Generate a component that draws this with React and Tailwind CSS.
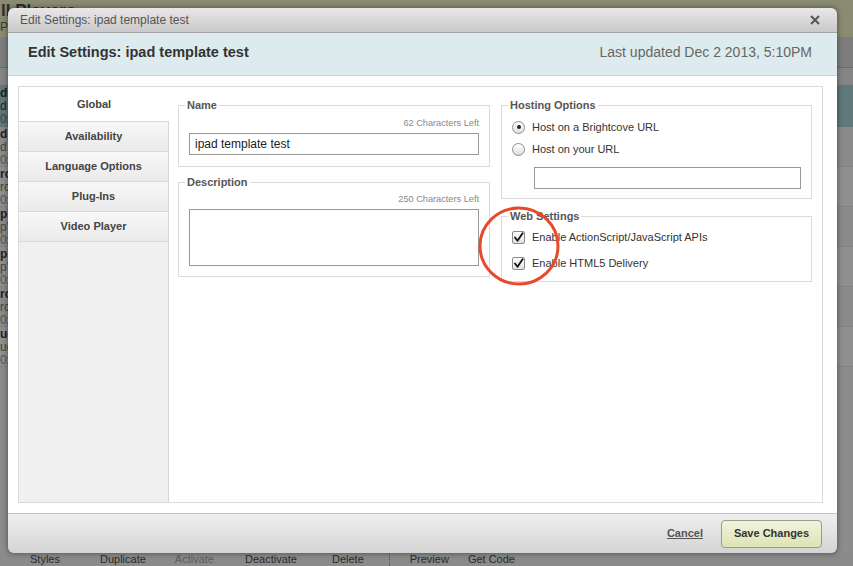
import React from "react";

function Radio({ checked }) {
  return (
    <span className="w-[13px] h-[13px] rounded-full border border-[#8c8c8c] bg-gradient-to-b from-white to-[#dedede] flex items-center justify-center shrink-0">
      {checked && <span className="w-[4px] h-[4px] rounded-full bg-[#222]" />}
    </span>
  );
}

function Check() {
  return (
    <span className="w-[13px] h-[13px] rounded-[2px] border border-[#8c8c8c] bg-gradient-to-b from-white to-[#e0e0e0] flex items-center justify-center shrink-0">
      <svg width="11" height="11" viewBox="0 0 11 11" fill="none">
        <path d="M2 5.5 L4.5 8.8 L9.6 1.2" stroke="#111" strokeWidth="1.8" strokeLinecap="round" strokeLinejoin="round" />
      </svg>
    </span>
  );
}

function Fieldset({ title, className, children }) {
  return (
    <fieldset className={"border border-[#dadada] px-[10px] " + className}>
      <legend className="-ml-[4px] px-[2px] text-[11px] leading-[13px] font-bold text-[#555]">{title}</legend>
      {children}
    </fieldset>
  );
}

const tabs = ["Availability", "Language Options", "Plug-Ins", "Video Player"];

export default function App() {
  return (
    <div className="relative w-[853px] h-[566px] overflow-hidden font-['Liberation_Sans',Arial,sans-serif] bg-[#8d8d8d]">
      {/* page behind the dialog */}
      <div className="flex flex-col h-full">
        <div className="h-[37px] bg-[#8a8b72] pt-[2px] overflow-hidden">
          <div className="text-[17px] leading-[17px] font-bold text-[#2e2e2a] pl-[1px]">ll Players</div>
          <div className="mt-[2px] text-[12px] leading-[13px] text-[#3a3a33]">Pl</div>
        </div>
        <div className="h-[31px] bg-[#7d7d7d] border-b border-[#6a6a6a]" />
        <div className="h-[17px] bg-[#858585]" />
        <div className="h-[42px] bg-[#607879] text-[12px] leading-[13px] text-[#222] pt-[2px]">
          <div className="font-bold">d</div>
          <div>d</div>
          <div className="text-[#444]">0x</div>
        </div>
        {["d", "rc", "p'", "p'", "rc", "ug"].map((t, i) => (
          <div
            key={i}
            className={"h-[40px] text-[12px] leading-[13px] text-[#222] pt-[1px] border-b border-[#818181] " + (i % 2 ? "bg-[#8f8f8f]" : "bg-[#8a8a8a]")}
          >
            <div className="font-bold">{t}</div>
            <div className="text-[#444]">{t}</div>
            <div className="text-[#555]">0x</div>
          </div>
        ))}
        <div className="flex-1 bg-[#8c8c8c]" />
        <div className="h-[14px] bg-[#8a8a8a] flex items-end text-[11px] leading-[13px] text-[#2a2a2a]">
          <span className="ml-[30px]">Styles</span>
          <span className="ml-[40px]">Duplicate</span>
          <span className="ml-[29px] text-[#5e5e5e]">Activate</span>
          <span className="ml-[31px]">Deactivate</span>
          <span className="ml-[35px]">Delete</span>
          <span className="ml-[25px] h-[13px] border-l border-dotted border-[#555]" />
          <span className="ml-[20px]">Preview</span>
          <span className="ml-[19px]">Get Code</span>
        </div>
      </div>

      {/* dialog */}
      <div className="absolute left-[8px] top-[8px] w-[829px] h-[545px] flex flex-col rounded-[6px] shadow-[0_0_5px_1px_rgba(0,0,0,0.35)]">
        <div className="h-[25px] rounded-t-[6px] bg-gradient-to-b from-[#e8e8e8] to-[#c9c9c9] border-b border-[#a3a3a3] flex items-center justify-between pl-[12px] pr-[17px]">
          <span className="text-[12px] text-[#555]">Edit Settings: ipad template test</span>
          <svg width="10" height="10" viewBox="0 0 10 10">
            <path d="M1 1 L9 9 M9 1 L1 9" stroke="#555" strokeWidth="2" />
          </svg>
        </div>
        <div className="h-[43px] bg-[#ddebee] border-b border-[#c9d3d5] flex items-center justify-between pl-[20px] pr-[25px] pb-[3px]">
          <span className="text-[14.5px] font-bold text-[#333]">Edit Settings: ipad template test</span>
          <span className="text-[14px] text-[#666]">Last updated Dec 2 2013, 5:10PM</span>
        </div>
        <div className="flex-1 bg-white pl-[10px] pr-[14px] pt-[10px] pb-[10px] flex">
          <div className="flex-1 border border-[#dadada] flex">
            <div className="w-[150px] bg-[#f0f0f0] flex flex-col">
              <div className="h-[34px] bg-white flex items-center justify-center text-[11px] font-bold text-[#444]">Global</div>
              {tabs.map((t) => (
                <div
                  key={t}
                  className="h-[30px] border-t border-r border-[#d8d8d8] bg-gradient-to-b from-[#f8f8f8] to-[#eaeaea] flex items-center justify-center text-[11px] font-bold text-[#444]"
                >
                  {t}
                </div>
              ))}
              <div className="flex-1 border-t border-r border-[#d8d8d8]" />
            </div>
            <div className="flex-1 flex gap-[11px] pl-[9px] pr-[10px] pt-[12px] items-start">
              <div className="w-[312px] flex flex-col gap-[9px]">
                <Fieldset title="Name" className="pb-[11px]">
                  <div className="pt-[6px] text-right text-[9.2px] leading-[11px] text-[#888]">62 Characters Left</div>
                  <div className="mt-[4px] h-[22px] border border-[#999] flex items-center px-[5px] text-[12px] text-[#222]">ipad template test</div>
                </Fieldset>
                <Fieldset title="Description" className="pb-[10px]">
                  <div className="pt-[5px] text-right text-[9.2px] leading-[11px] text-[#888]">250 Characters Left</div>
                  <div className="mt-[4px] h-[57px] border border-[#999]" />
                </Fieldset>
              </div>
              <div className="w-[311px] flex flex-col gap-[11px]">
                <Fieldset title="Hosting Options" className="pb-[9px]">
                  <div className="mt-[7px] h-[16px] flex items-center gap-[7px] text-[11px] text-[#333]">
                    <Radio checked />
                    Host on a Brightcove URL
                  </div>
                  <div className="mt-[6px] h-[16px] flex items-center gap-[7px] text-[11px] text-[#333]">
                    <Radio />
                    Host on your URL
                  </div>
                  <div className="mt-[10px] ml-[22px] h-[22px] border border-[#999]" />
                </Fieldset>
                <Fieldset title="Web Settings" className="pb-[10px]">
                  <div className="mt-[6px] h-[16px] flex items-center gap-[7px] text-[11px] text-[#333]">
                    <Check />
                    Enable ActionScript/JavaScript APIs
                  </div>
                  <div className="mt-[10px] h-[16px] flex items-center gap-[7px] text-[11px] text-[#333]">
                    <Check />
                    Enable HTML5 Delivery
                  </div>
                </Fieldset>
              </div>
            </div>
          </div>
        </div>
        <div className="h-[40px] rounded-b-[6px] bg-gradient-to-b from-[#efefef] to-[#d4d4d4] border-t border-[#c4c4c4] flex items-center justify-end pr-[15px]">
          <span className="text-[11px] font-bold text-[#555] underline">Cancel</span>
          <button className="ml-[18px] w-[101px] h-[28px] rounded-[4px] border border-[#9a9a8a] bg-gradient-to-b from-[#f1f3dc] to-[#dde3b3] text-[11px] font-bold text-[#333]">
            Save Changes
          </button>
        </div>
      </div>

      {/* red annotation circle */}
      <svg className="absolute left-[476px] top-[204px]" width="86" height="84" viewBox="0 0 86 84" fill="none">
        <ellipse cx="43" cy="42" rx="39" ry="38" stroke="#e9492b" strokeWidth="3" />
      </svg>
    </div>
  );
}
